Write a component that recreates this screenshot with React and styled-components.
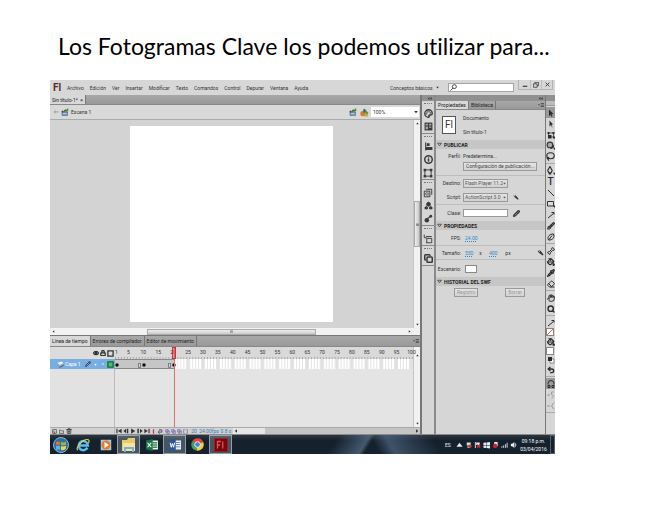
import React from "react";
import styled, { createGlobalStyle, css } from "styled-components";
import {
  Wrench, Pencil, Search, Hand, Eraser, Pipette, PaintBucket, Lasso,
  Brush, Bone, Eye, Lock, Trash2, Palette, Info, Copy, Undo2,
} from "lucide-react";

const GlobalStyle = createGlobalStyle`
  * { box-sizing: border-box; }
  body { margin: 0; background: #fff; }
  button, input, select { font: inherit; color: inherit; margin: 0; padding: 0; border: 0; background: none; border-radius: 0; }
  svg { display: block; flex: none; }
`;

const ui = 'Roboto, "Liberation Sans", Arial, sans-serif';

const Slide = styled.main`
  padding: 30px 92px 0 50px;
`;
const Title = styled.h1`
  margin: 0 0 18px;
  padding-left: 8px;
  font: 400 23px/32px Lato, "Open Sans", sans-serif;
  font-variant-ligatures: none;
  color: #000;
  white-space: nowrap;
`;
const Desktop = styled.section`
  font: 400 5px/8px ${ui};
  color: #333;
  background: #d6d6d6;
  white-space: nowrap;
`;
const row = css`
  display: flex;
  align-items: center;
`;

/* Application bar */
const AppBar = styled.header`
  ${row}
  height: 15px;
  padding-left: 3px;
  background: #d7d7d7;
`;
const Logo = styled.span`
  width: 14px;
  font: 700 10px/12px ${ui};
  color: #5a2a28;
`;
const Menu = styled.nav`
  ${row}
  flex: 1;
  gap: 6px;
`;
const PlainButton = styled.button`
  line-height: 8px;
`;
const PlainSelect = styled.select`
  appearance: none;
  outline: 0;
  flex: ${(p) => (p.$grow ? 1 : "none")};
  min-width: 0;
  line-height: 8px;
`;
const Workspace = styled.label`
  ${row}
  gap: 3px;
  margin-right: 9px;
`;
const SearchBox = styled.label`
  ${row}
  width: 66px;
  height: 9px;
  padding-left: 1px;
  background: #fff;
  border: 1px solid #a5a5a5;
  input { width: 50px; height: 7px; outline: 0; }
`;
const WindowButtons = styled.div`
  ${row}
  align-self: flex-start;
  margin: 0 2px 0 4px;
  height: 10px;
  border: 1px solid #b4b4b4;
  border-top: 0;
  button { ${row} justify-content: center; width: 11px; height: 9px; }
  button + button { border-left: 1px solid #bcbcbc; }
`;

/* Work area */
const WorkArea = styled.div`
  display: flex;
  border-bottom: 1px solid #8a8a8a;
`;
const Editor = styled.div`
  flex: 1;
  min-width: 0;
  display: flex;
  flex-direction: column;
  border-right: 2px solid #777;
`;
const TabStrip = styled.div`
  ${row}
  height: ${(p) => p.$h || 10}px;
  background: linear-gradient(#a8a8a8, #999);
  border-bottom: 1px solid #888;
`;
const Tab = styled.button`
  height: 100%;
  padding: 0 2px;
  border-right: 1px solid #777;
  background: ${(p) => (p.$active ? "#d8d8d8" : "transparent")};
  color: #222;
`;
const PushRight = styled.span`
  ${row}
  margin-left: auto;
  padding-right: 1px;
`;
const SceneBar = styled.div`
  ${row}
  height: 15px;
  gap: 2px;
  padding: 0 1px 0 3px;
  border-bottom: 1px solid #aaa;
  background: #d9d9d9;
`;
const Zoom = styled.label`
  ${row}
  width: 48px;
  height: 10px;
  padding: 0 1px 0 2px;
  background: #fff;
`;
const StageArea = styled.div`
  display: grid;
  grid-template-columns: 1fr 7px;
  background: #d3d3d3;
`;
const StagePad = styled.div`
  padding: 6px 22%;
`;
const Stage = styled.div`
  height: 196px;
  background: #fff;
`;
const VTrack = styled.div`
  display: flex;
  flex-direction: column;
  align-items: center;
  justify-content: space-between;
  padding: 2px 0;
  background: #f2f2f2;
  border-left: 1px solid #c4c4c4;
`;
const VThumb = styled.div`
  ${row}
  justify-content: center;
  width: 6px;
  height: 46px;
  background: linear-gradient(90deg, #eee, #c8c8c8);
  border: 1px solid #aaa;
`;
const HTrack = styled.div`
  ${row}
  justify-content: space-between;
  height: 8px;
  padding: 0 9px 0 2px;
  background: #f2f2f2;
  border-bottom: 1px solid #777;
`;
const HThumb = styled.div`
  ${row}
  justify-content: center;
  width: 47%;
  height: 6px;
  background: linear-gradient(#eee, #cacaca);
  border: 1px solid #aaa;
`;

/* Timeline */
const Timeline = styled.div`
  display: grid;
  grid-template-columns: 65px 1fr 7px;
  grid-template-rows: 12px 10px 58px;
`;
const LayerHead = styled.div`
  ${row}
  justify-content: flex-end;
  gap: 1px;
  padding-right: 1px;
  background: #dcdcdc;
`;
const Layer = styled.div`
  ${row}
  gap: 1px;
  padding: 0 1px 0 7px;
  background: #79afe0;
  color: #fff;
  span { flex: 1; }
`;
const LayerSpace = styled.div`
  background: #e2e2e2;
  border-right: 1px solid #bbb;
`;
const Frames = styled.div`
  position: relative;
  grid-column: 2;
  grid-row: 1 / 4;
  display: grid;
  grid-template-rows: 12px 10px 1fr;
  background: #e4e4e4;
`;
const Ruler = styled.div`
  display: grid;
  grid-template-columns: repeat(100, minmax(0, 1fr));
  line-height: 10px;
  background: linear-gradient(90deg, #aaa 1px, transparent 1px) 0 100% / 1% 2px repeat-x, #d9d9d9;
`;
const Mark = styled.span`
  grid-row: 1;
  grid-column: ${(p) => p.$at};
  display: flex;
  justify-content: center;
`;
const FrameRow = styled.div`
  display: flex;
  background:
    linear-gradient(90deg, #e4e4e4 1px, transparent 1px) 0 0 / 1% 100%,
    linear-gradient(90deg, transparent 80%, #e0e0e0 80%) 0 0 / 5% 100%, #fff;
`;
const Span = styled.div`
  ${row}
  justify-content: space-between;
  width: ${(p) => p.$frames}%;
  padding-top: 2px;
  background: #c6c6c6;
  border: solid #888;
  border-width: 1px 0;
`;
const Playhead = styled.div`
  position: absolute;
  top: 0;
  bottom: 0;
  left: 19%;
  width: 4px;
  background: linear-gradient(90deg, transparent 2px, #e07070 2px, #e07070 3px, transparent 3px);
  &::before {
    content: "";
    display: block;
    height: 10px;
    border: 1px solid #c33;
    background: rgba(220, 70, 70, 0.4);
  }
`;
const TimelineFoot = styled.div`
  ${row}
  height: 7px;
  background: #d2d2d2;
  border-top: 1px solid #aaa;
`;
const LayerTools = styled.div`
  ${row}
  width: 65px;
  gap: 2px;
  padding-left: 2px;
  border-right: 1px solid #bbb;
`;
const Transport = styled.div`
  ${row}
  gap: 1px;
  padding: 0 1px;
`;
const Readout = styled.span`
  width: ${(p) => p.$w}px;
  text-align: center;
  color: #3a7ab5;
`;
const FootScroll = styled.div`
  ${row}
  flex: 1;
  height: 6px;
  justify-content: space-between;
  padding: 0 1px;
  background: linear-gradient(90deg, #e6e6e6 32px, #c4c4c4 32px);
`;

/* Docked icon column */
const Dock = styled.aside`
  width: 14px;
  border-right: 2px solid #8a8a8a;
`;
const DockHead = styled.div`
  ${row}
  justify-content: flex-end;
  height: 6px;
  padding-right: 2px;
  background: #909090;
`;
const DockGroup = styled.div`
  display: flex;
  flex-direction: column;
  align-items: center;
  padding-top: 2px;
  border-bottom: 1px solid #888;
`;
const Grip = styled.div`
  width: 8px;
  height: 4px;
  border-top: 1px dotted #777;
`;
const DockButton = styled.button`
  ${row}
  justify-content: center;
  width: 12px;
  height: 13px;
  color: #3a3a3a;
`;

/* Properties */
const Panel = styled.aside`
  width: 110px;
  border-right: 1px solid #777;
`;
const DocInfo = styled.div`
  display: grid;
  grid-template-columns: 14px 1fr;
  grid-template-rows: 14px 14px;
  align-items: center;
  column-gap: 7px;
  height: 30px;
  padding: 1px 0 0 6px;
`;
const DocIcon = styled.span`
  grid-row: 1 / 3;
  height: 18px;
  background: #fff;
  border: 1px solid #555;
  font: 400 10px/16px ${ui};
  text-align: center;
  color: #333;
`;
const SectionHead = styled.h2`
  ${row}
  gap: 2px;
  height: 9px;
  margin: 0;
  padding-left: 1px;
  background: #c6c6c6;
  font: 700 5px/8px ${ui};
  color: #222;
`;
const Block = styled.div`
  padding: ${(p) => p.$pad || 0}px 0;
  border-bottom: ${(p) => (p.$last ? "0" : "1px solid #bdbdbd")};
`;
const Field = styled.div`
  ${row}
  gap: 2px;
  height: ${(p) => p.$h || 13}px;
`;
const FieldLabel = styled.label`
  width: 25px;
  text-align: right;
`;
const PushButton = styled.button`
  height: 9px;
  padding: 0 2px;
  line-height: 7px;
  border: 1px solid #999;
  background: linear-gradient(#e4e4e4, #d2d2d2);
  color: ${(p) => (p.disabled ? "#999" : "#444")};
  min-width: ${(p) => p.$w || 0}px;
`;
const Publish = styled.div`
  padding: 0 0 4px 27px;
  display: flex;
`;
const Dropdown = styled.span`
  ${row}
  width: 45px;
  height: 9px;
  padding: 0 1px;
  border: 1px solid #999;
  background: linear-gradient(#e4e4e4, #d2d2d2);
  color: #555;
  margin-right: 3px;
`;
const ClassInput = styled.input`
  width: 45px;
  height: 8px;
  border: 1px solid #999;
  background: #fff;
  margin-right: 3px;
`;
const Hot = styled.button`
  width: ${(p) => p.$w || 11}px;
  text-align: left;
  color: #2f86c9;
  text-decoration: underline dotted;
  padding-left: 2px;
`;
const Unit = styled.span`
  width: ${(p) => p.$w}px;
  text-align: center;
`;
const Swatch = styled.button`
  display: block;
  width: ${(p) => p.$w || 8}px;
  height: 8px;
  margin-left: ${(p) => (p.$w ? 2 : 0)}px;
  border: 1px solid #888;
  background: ${(p) =>
    p.$none ? "linear-gradient(135deg,#fff 45%,#d55 45%,#d55 55%,#fff 55%)" : "#fff"};
`;
const HistoryButtons = styled.div`
  ${row}
  justify-content: space-between;
  padding: 2px 20px 0 18px;
`;

/* Tools */
const Toolbox = styled.aside`
  width: 9px;
  display: flex;
  flex-direction: column;
`;
const ToolCap = styled.div`
  height: 11px;
  background: #bdbdbd;
  border-top: 6px solid #909090;
  border-bottom: 1px solid #999;
`;
const ToolGroup = styled.div`
  padding: 1px 0;
  border-bottom: 1px solid #aaa;
`;
const Tool = styled.button`
  ${row}
  justify-content: center;
  width: 100%;
  height: ${(p) => p.$h || 11}px;
  color: ${(p) => (p.$faint ? "#999" : "#2a2a2a")};
  background: ${(p) => (p.$active ? "#999" : "transparent")};
  font: 500 10px/10px ${ui};
`;

/* Taskbar */
const Taskbar = styled.footer`
  ${row}
  height: 19px;
  color: #e8edf2;
  background:
    linear-gradient(122deg, transparent 56%, rgba(100, 125, 155, 0.6) 62%, transparent 63%),
    linear-gradient(60deg, transparent 64%, rgba(90, 115, 145, 0.6) 67%, transparent 76%),
    linear-gradient(#2b3641, #14202b 30%, #16222e);
`;
const Launchers = styled.div`
  ${row}
  flex: 1;
`;
const Launcher = styled.button`
  ${row}
  justify-content: center;
  width: ${(p) => (p.$first ? 21 : 23)}px;
  height: 19px;
  border: 1px solid ${(p) => (p.$open ? "rgba(220,230,240,.5)" : "transparent")};
  background: ${(p) => (p.$open ? "rgba(190,205,220,.3)" : "none")};
`;
const Tray = styled.div`
  ${row}
  gap: 2px;
  svg { width: 7px; height: 8px; }
`;
const Lang = styled.span`
  width: 9px;
`;
const Clock = styled.time`
  width: 33px;
  text-align: center;
  color: #fff;
`;
const ShowDesktop = styled.button`
  width: 5px;
  height: 19px;
  border: 1px solid #55616d;
`;

const Glyph = ({ d, size = 8, fill = "currentColor", children }) => (
  <svg width={size} height={size} viewBox="0 0 16 16" fill={fill} aria-hidden="true">
    {d ? <path d={d} /> : children}
  </svg>
);
const Arrow = ({ dir = "down", size = 4 }) => {
  const paths = {
    down: "M1 4h14l-7 9z", up: "M1 12h14l-7-9z", left: "M12 1v14l-9-7z", right: "M4 1v14l9-7z",
  };
  return <Glyph d={paths[dir]} size={size} />;
};
const line = { fill: "none", stroke: "currentColor", strokeWidth: 2 };
const Twist = () => <Glyph size={5}><path d="M2 4h12l-6 8z" {...line} /></Glyph>;
const Chevrons = () => <Glyph size={5} fill="#444" d="M8 3 2 8l6 5V3zm7 0L9 8l6 5V3z" />;
const PanelMenu = () => (
  <Glyph size={6} fill="#444" d="M0 5h5L2.500 9zM7 3h9v2H7zm0 4h9v2H7zm0 4h9v2H7z" />
);
const SceneIcon = ({ size = 8 }) => (
  <Glyph size={size}>
    <path d="M2 8h11v7H2z" fill="#7f9fc0" stroke="#3b4f66" /><path d="m1 6 11-4 1 3L2 9z" fill="#333" />
    <path d="m3 5 3-1 1 2-3 1zm6-2 2-1 1 2-2 1z" fill="#ddd" /><path d="M4 11h7v1H4z" fill="#e6eef6" />
    <path d="m8 6 6-6 1 5-4 4z" fill="#4a963b" />
  </Glyph>
);
const SymbolIcon = () => (
  <Glyph size={9}>
    <path d="m8 1 7 8-4 6-5-6z" fill="#4b9b45" /><circle cx="5" cy="10" r="4.500" fill="#d67b2e" />
    <path d="m10 8 5 7H7z" fill="#c9a92e" /><path d="M6 2h3v6H6z" fill="#355b86" />
  </Glyph>
);
const Dot = () => <Glyph size={4} fill="#111"><circle cx="8" cy="8" r="7" /></Glyph>;
const EndMark = () => <Glyph size={5}><path d="M5 1h6v13H5z" fill="#eee" stroke="#333" strokeWidth="2" /></Glyph>;

const p = { size: 8, strokeWidth: 3.5 };
const dockGroups = [
  [["Color", <Palette size={9} strokeWidth={3.500} />],
   ["Muestras", <Glyph size={9}><path d="M1 1h14v14H1z" /><path d="M3 3h4v3H3zm6 0h4v3H9zM3 8h4v5H3zm6 0h4v2H9z" fill="#aaa" /></Glyph>]],
  [["Alinear", <Glyph size={9} d="M2 1h2v14H2zM5 2h5v5H5zM2 9h13v5H2z" />],
   ["Información", <Info size={9} strokeWidth={4} />],
   ["Transformar", <Glyph size={10}><path d="M3 3h10v10H3z" {...line} strokeWidth="1.500" /><path d="M1 1h4v4H1zm10 0h4v4h-4zM1 11h4v4H1zm10 0h4v4h-4z" /></Glyph>]],
  [["Fragmentos de código", <Glyph size={10}><path d="M5 2h9v9M2 5h9v9H2z" {...line} strokeWidth="1.500" /><path d="M6 7 4 9.500 6 12M8 7v5" {...line} strokeWidth="1.500" /></Glyph>],
   ["Componentes", <Glyph size={9}><path d="M8 1 4 4v4l4 2 4-2V4zM4 9 1 11v3l3 1 3-1v-3zm8 0-3 2v3l3 1 3-1v-3z" /></Glyph>],
   ["Movimiento", <Glyph size={9}><circle cx="5" cy="11" r="4" /><circle cx="12" cy="4" r="2.500" /><path d="m6 8 5-3" {...line} /></Glyph>]],
  [["Historial", <Glyph size={10}><path d="M2 1v5h4M5 4h9M5 14h9V7H6v7" {...line} strokeWidth="1.500" /></Glyph>]],
  [["Proyecto", <Copy size={9} strokeWidth={4} />]],
];
const toolGroups = [
  [["Selección", <Glyph d="m4 1 9 9-4 .500 2 4-2 1-2-4-3 3z" />, true],
   ["Subselección", <Glyph d="m5 1 7 8-3 .500 2 5-1 .500-2-5-3 3z" />],
   ["Transformación libre", <Glyph><path d="M3 4h10v8H3z" {...line} strokeWidth="1.500" /><path d="M1 2h4v4H1zm10 0h4v4h-4zM2 8h7v7H2zm10 3h4v4h-4z" /></Glyph>],
   ["Rotación 3D", <Glyph size={9}><circle cx="7" cy="7" r="5" fill="#aaa" stroke="#333" strokeWidth="2" /><path d="M7 14c6 0 8-4 7-8l-3 4zM12 12h4v4z" /></Glyph>],
   ["Lazo", <Lasso size={9} strokeWidth={3} />]],
  [["Pluma", <Glyph size={9}><path d="m7 1 4 7-2 4H5L3 8z" {...line} /><path d="M5 12h4v3H5zm7 0h4v4z" /></Glyph>],
   ["Texto", "T"],
   ["Línea", <Glyph><path d="m2 2 12 12" {...line} /></Glyph>],
   ["Rectángulo", <Glyph><path d="M1 3h12v9H1z" fill="#ddd" stroke="#333" strokeWidth="2" /><path d="M11 11h5v5z" /></Glyph>],
   ["Lápiz", <Glyph><path d="M2 14 13 5M9 3h5v4" {...line} /></Glyph>],
   ["Pincel", <Brush {...p} />],
   ["Deco", <Glyph><path d="M3 14c-3-7 2-12 10-12 3 6-2 13-10 12zm1-1 6-8" {...line} /></Glyph>]],
  [["Hueso", <Bone {...p} strokeWidth={3} />], ["Cubo de pintura", <PaintBucket {...p} />],
   ["Cuentagotas", <Pipette {...p} />], ["Borrador", <Eraser {...p} strokeWidth={3} />]],
  [["Mano", <Hand {...p} strokeWidth={3} />], ["Ampliar", <Search {...p} strokeWidth={4} />]],
];

const Apps = [
  ["Inicio", false, <Glyph size={16}><circle cx="8" cy="8" r="7.500" fill="#2e6f9e" stroke="#8db8d0" /><path d="M3 5q2-1 4 0v3q-2-1-4 0z" fill="#ef6a32" /><path d="M8 5q3 1 5-.500v3Q11 9 8 8z" fill="#8ac144" /><path d="M3 9q2-1 4 0v4q-2-1-4 0z" fill="#56b6e6" /><path d="M8 9q3 1 5-.500v3Q11 14 8 13z" fill="#f7cf46" /></Glyph>],
  ["Internet Explorer", false, <Glyph size={14}><path d="M13 11A5.200 5.200 0 1 1 13.500 8.500H4" fill="none" stroke="#56c0ee" strokeWidth="2.800" /><path d="M2 14C-1 11 9 0 14 2q2 1 0 4" fill="none" stroke="#f0cc55" strokeWidth="1.300" /></Glyph>],
  ["Reproductor", false, <Glyph size={12}><path d="M1 1h14v14H1z" fill="#a9cbe0" /><circle cx="8" cy="8" r="6" fill="#e97a25" /><path d="m6 4 6 4-6 4z" fill="#fff" /></Glyph>],
  ["Explorador", true, <Glyph size={16}><path d="M1 3h5l1-2h7v13H1z" fill="#eacb69" /><path d="M2 6h12v8H2z" fill="#f6e4a0" /><path d="M3 10h10v5h-2v-3H5v3H3z" fill="#6fb4d8" /></Glyph>],
  ["Excel", false, <Glyph size={12}><path d="M7 2h9v12H7z" fill="#e8f3ec" /><path d="M9 4h6v2H9zm0 3h6v2H9zm0 3h6v2H9z" fill="#3b8c5b" /><path d="m0 2 9-2v16l-9-2z" fill="#187343" /><path d="m2 5 5 6m0-6-5 6" stroke="#fff" strokeWidth="1.500" /></Glyph>],
  ["Word", true, <Glyph size={12}><path d="M7 2h9v12H7z" fill="#eef3fa" /><path d="M9 4h6v1H9zm0 3h6v1H9zm0 3h6v1H9z" fill="#416ab0" /><path d="m0 2 9-2v16l-9-2z" fill="#2a5699" /><path d="m1.500 5 1.500 6 1.500-5L6 11l1.500-6" fill="none" stroke="#fff" strokeWidth="1.300" /></Glyph>],
  ["Chrome", false, <Glyph size={13}><path d="M8 8 1.500 4A7.500 7.500 0 0 1 15 5z" fill="#df473c" /><path d="m8 8-1 7.500A7.500 7.500 0 0 1 1.500 4z" fill="#3ea457" /><path d="m8 8 7-3A7.500 7.500 0 0 1 7 15.500z" fill="#f6ca42" /><circle cx="8" cy="8" r="3.500" fill="#4b82df" stroke="#fff" /></Glyph>],
  ["Flash", true, <Glyph size={14}><path d="M0 0h16v16H0z" fill="#a51d22" /><path d="M1 1h14v14H1z" fill="#6d0d12" /><path d="M4 12V4h4M4 8h3M10 4v8" fill="none" stroke="#f1484b" strokeWidth="1.500" /></Glyph>],
];

const menus = ["Archivo", "Edición", "Ver", "Insertar", "Modificar", "Texto", "Comandos", "Control", "Depurar", "Ventana", "Ayuda"];
const marks = [1, ...Array.from({ length: 20 }, (_, i) => (i + 1) * 5)];
const transport = [
  ["Primer fotograma", "M1 2h3v12H1zM15 2v12L5 8z"],
  ["Anterior", "M8 2v12L1 8zM10 2h4v12h-4z"],
  ["Reproducir", "M3 1v14l11-7z"],
  ["Siguiente", "M1 2h4v12H1zm7 0v12l7-6z"],
  ["Último fotograma", "M1 2v12l9-6zm11 0h3v12h-3z"],
];

export default function App() {
  return (
    <>
      <GlobalStyle />
      <Slide>
        <Title>Los Fotogramas Clave los podemos utilizar para...</Title>
        <Desktop>
          <AppBar>
            <Logo>Fl</Logo>
            <Menu>{menus.map((m) => <PlainButton key={m}>{m}</PlainButton>)}</Menu>
            <Workspace>
              <PlainSelect aria-label="Espacio de trabajo"><option>Conceptos básicos</option></PlainSelect>
              <Arrow size={3} />
            </Workspace>
            <SearchBox><Glyph size={7}><circle cx="10" cy="6" r="4.500" {...line} /><path d="m7 9-6 6" {...line} /></Glyph><input aria-label="Buscar" /></SearchBox>
            <WindowButtons>
              <button aria-label="Minimizar"><Glyph size={6} d="M2 10h12v3H2z" /></button>
              <button aria-label="Restaurar"><Glyph size={6}><path d="M5 5V1h10v9h-4M1 5h10v9H1z" {...line} /></Glyph></button>
              <button aria-label="Cerrar"><Glyph size={5}><path d="m2 2 12 12M14 2 2 14" {...line} strokeWidth="3" /></Glyph></button>
            </WindowButtons>
          </AppBar>

          <WorkArea>
            <Editor>
              <TabStrip><Tab $active>Sin título-1* &nbsp;×</Tab></TabStrip>
              <SceneBar>
                <Glyph size={6} fill="#aaa" d="M7 2v4h8v3H7v4L1 8z" />
                <SceneIcon /><span>Escena 1</span>
                <PushRight><SceneIcon /></PushRight>
                <SymbolIcon />
                <Zoom>
                  <PlainSelect $grow aria-label="Zoom"><option>100%</option></PlainSelect>
                  <Arrow />
                </Zoom>
              </SceneBar>
              <StageArea>
                <StagePad><Stage /></StagePad>
                <VTrack>
                  <Arrow dir="up" size={3} />
                  <VThumb><Glyph size={3} d="M1 2h14v2H1zm0 5h14v2H1zm0 5h14v2H1z" /></VThumb>
                  <Arrow size={3} />
                </VTrack>
              </StageArea>
              <HTrack>
                <Arrow dir="left" size={3} />
                <HThumb><Glyph size={3} d="M2 1h2v14H2zm5 0h2v14H7zm5 0h2v14h-2z" /></HThumb>
                <Arrow dir="right" size={3} />
              </HTrack>
              <TabStrip $h={11}>
                <Tab $active>Línea de tiempo</Tab>
                <Tab>Errores de compilador</Tab>
                <Tab>Editor de movimiento</Tab>
                <PushRight><PanelMenu /></PushRight>
              </TabStrip>
              <Timeline>
                <LayerHead>
                  <Eye size={6} strokeWidth={5} /><Lock size={6} strokeWidth={5} />
                  <Glyph size={7}><path d="M2 2h12v12H2z" {...line} strokeWidth="3" /></Glyph>
                </LayerHead>
                <Frames>
                  <Ruler>{marks.map((m) => <Mark key={m} $at={m}>{m}</Mark>)}</Ruler>
                  <FrameRow>
                    <Span $frames={9}><Dot /><EndMark /></Span>
                    <Span $frames={10}><Dot /><EndMark /></Span>
                    <Span $frames={1}><Dot /></Span>
                  </FrameRow>
                  <Playhead />
                </Frames>
                <VTrack><span /><Arrow dir="up" size={3} /></VTrack>
                <Layer>
                  <Glyph size={7}><path d="M1 4 10 1l5 4-9 4z" fill="#eee" /><path d="m2 8 4 6 9-6v3l-9 5z" fill="#555" /></Glyph>
                  <span>Capa 1</span>
                  <Pencil size={6} strokeWidth={3} color="#223" />
                  <Glyph size={7}><circle cx="8" cy="8" r="2" /></Glyph>
                  <Glyph size={6}><circle cx="8" cy="8" r="2" /></Glyph>
                  <Glyph size={7}><path d="M2 2h12v12H2z" fill="#43c463" stroke="#176a2c" strokeWidth="3" /></Glyph>
                </Layer>
                <VTrack />
                <LayerSpace />
                <VTrack><span /><Arrow size={3} /></VTrack>
              </Timeline>
              <TimelineFoot>
                <LayerTools>
                  <Glyph size={5}><path d="M2 2h12v12H2zM2 9h6v5" {...line} /></Glyph>
                  <Glyph size={5}><path d="M1 4h5l2 2h7v8H1z" {...line} /></Glyph>
                  <Trash2 size={6} strokeWidth={3} />
                </LayerTools>
                <Transport>
                  {transport.map(([name, d]) => (
                    <PlainButton key={name} aria-label={name}><Glyph size={6} d={d} /></PlainButton>
                  ))}
                  <Glyph size={5} fill="#c33" d="M6 1h4v14H6z" />
                  <Glyph size={6}><path d="M5 5h8v6H4m3-4-4 4 4 4" {...line} /></Glyph>
                </Transport>
                <Transport>
                  {[0, 1, 2, 3].map((n) => (
                    <Glyph key={n} size={5} fill="none"><path d={n === 3 ? "M6 2H2v12h4m4-12h4v12h-4" : "M2 2h8v8H2zM6 6h8v8H6z"} stroke="#6b5da0" strokeWidth="2" /></Glyph>
                  ))}
                </Transport>
                <Readout $w={10}>20</Readout><Readout $w={20}>24.00fps</Readout><Readout $w={14}>0.8 s</Readout>
                <FootScroll><Arrow dir="left" size={4} /><Arrow dir="right" size={4} /></FootScroll>
              </TimelineFoot>
            </Editor>

            <Dock>
              <DockHead><Chevrons /></DockHead>
              {dockGroups.map((group, i) => (
                <DockGroup key={i}>
                  <Grip />
                  {group.map(([name, icon]) => <DockButton key={name} aria-label={name}>{icon}</DockButton>)}
                </DockGroup>
              ))}
            </Dock>

            <Panel>
              <DockHead><Chevrons /></DockHead>
              <TabStrip $h={9}>
                <Tab $active>Propiedades</Tab><Tab>Biblioteca</Tab>
                <PushRight><PanelMenu /></PushRight>
              </TabStrip>
              <DocInfo><DocIcon>Fl</DocIcon><span>Documento</span><span>Sin título-1</span></DocInfo>
              <SectionHead><Twist />PUBLICAR</SectionHead>
              <Block>
                <Field $h={13}><FieldLabel as="span">Perfil:</FieldLabel><span>Predetermina...</span></Field>
                <Publish><PushButton>Configuración de publicación...</PushButton></Publish>
              </Block>
              <Block>
                <Field $h={14}>
                  <FieldLabel htmlFor="target">Destino:</FieldLabel>
                  <Dropdown><PlainSelect $grow id="target"><option>Flash Player 11.2</option></PlainSelect><Arrow size={3} /></Dropdown>
                </Field>
                <Field $h={14}>
                  <FieldLabel htmlFor="script">Script:</FieldLabel>
                  <Dropdown><PlainSelect $grow id="script"><option>ActionScript 3.0</option></PlainSelect><Arrow size={3} /></Dropdown>
                  <Glyph size={6}><path d="M2 2v4l3 3 8 6 2-2-6-8-3-3H5l2 3-2 2z" /></Glyph>
                </Field>
              </Block>
              <Block $last $pad={1}>
                <Field $h={14}>
                  <FieldLabel htmlFor="class">Clase:</FieldLabel><ClassInput id="class" /><Pencil size={7} strokeWidth={4} />
                </Field>
              </Block>
              <SectionHead><Twist />PROPIEDADES</SectionHead>
              <Block $pad={1}>
                <Field><FieldLabel as="span">FPS:</FieldLabel><Hot $w={16}>24.00</Hot></Field>
              </Block>
              <Block>
                <Field>
                  <FieldLabel as="span">Tamaño:</FieldLabel>
                  <Hot>550</Hot><Unit $w={9}>x</Unit><Hot>400</Hot><Unit $w={16}>px</Unit>
                  <PushRight><PlainButton aria-label="Editar tamaño"><Glyph size={7}><path d="M2 2v4l3 3 8 6 2-2-6-8-3-3H5l2 3-2 2z" /></Glyph></PlainButton></PushRight>
                </Field>
              </Block>
              <Block $last $pad={2}>
                <Field><FieldLabel htmlFor="scene">Escenario:</FieldLabel><Swatch id="scene" $w={12} aria-label="Color del escenario" /></Field>
              </Block>
              <SectionHead><Twist />HISTORIAL DEL SWF</SectionHead>
              <HistoryButtons><PushButton disabled $w={24}>Registro</PushButton><PushButton disabled $w={20}>Borrar</PushButton></HistoryButtons>
            </Panel>

            <Toolbox>
              <ToolCap />
              {toolGroups.map((group, i) => (
                <ToolGroup key={i}>
                  {group.map(([name, icon, active]) => <Tool key={name} $active={active} aria-label={name}>{icon}</Tool>)}
                </ToolGroup>
              ))}
              <ToolGroup>
                <Tool $h={11} aria-label="Trazo"><Glyph><path d="M2 14 13 5M9 3h5v4" {...line} /></Glyph></Tool>
                <Swatch $none aria-label="Color de trazo" />
                <Tool $h={11} aria-label="Relleno"><PaintBucket {...p} /></Tool>
                <Swatch aria-label="Color de relleno" />
                <Tool $h={10} aria-label="Blanco y negro"><Glyph><path d="M6 6h8v8H6z" fill="#fff" stroke="#333" /><path d="M2 2h8v8H2z" /></Glyph></Tool>
                <Tool $h={10} aria-label="Intercambiar"><Undo2 {...p} strokeWidth={4} /></Tool>
              </ToolGroup>
              <ToolGroup>
                <Tool $active aria-label="Ajustar"><Glyph><path d="M2 9V7a6 6 0 0 1 12 0v2M2 11v4h4v-4zm8 0v4h4v-4z" {...line} /></Glyph></Tool>
                <Tool $faint aria-label="Suavizar"><Glyph><path d="M0 8h6M14 2H9v5c5 0 5 7 0 7" {...line} /></Glyph></Tool>
                <Tool $faint aria-label="Enderezar"><Glyph><path d="M0 8h6M14 1 9 8l5 7" {...line} /></Glyph></Tool>
              </ToolGroup>
            </Toolbox>
          </WorkArea>

          <Taskbar>
            <Launchers>
              {Apps.map(([name, open, icon], i) => <Launcher key={name} $first={i === 0} $open={open} aria-label={name}>{icon}</Launcher>)}
            </Launchers>
            <Tray>
              <Lang>ES</Lang>
              <Arrow dir="up" />
              <Glyph><path d="M4 2h9v7H4zM6 10h5v5H6z" fill="#ddd" /><circle cx="11" cy="11" r="4" fill="#c53b42" /></Glyph>
              <Glyph><path d="M2 1h2v14H2zM5 2h8v6H5z" fill="#eee" /><path d="m7 7 7 7m0-7-7 7" stroke="#d33" strokeWidth="3" /></Glyph>
              <Glyph d="m1 3 6-1v6H1zm7-1 8-1v7H8zM1 9h6v6l-6-1zm7 0h8v7l-8-1z" />
              <Glyph><path d="M5 1h8v10H5z" fill="#ddd" /><circle cx="7" cy="10" r="5" fill="#c8232c" /></Glyph>
              <Glyph d="M1 14v-3h2v3zm4 0V9h2v5zm4 0V6h2v8zm4 0V3h2v11z" />
              <Glyph><path d="M2 5h3l5-4v14l-5-4H2z" /><path d="M12 4q3 4 0 8" {...line} /></Glyph>
            </Tray>
            <Clock>09:18 p.m.<br />03/04/2016</Clock>
            <ShowDesktop aria-label="Mostrar escritorio" />
          </Taskbar>
        </Desktop>
      </Slide>
    </>
  );
}
